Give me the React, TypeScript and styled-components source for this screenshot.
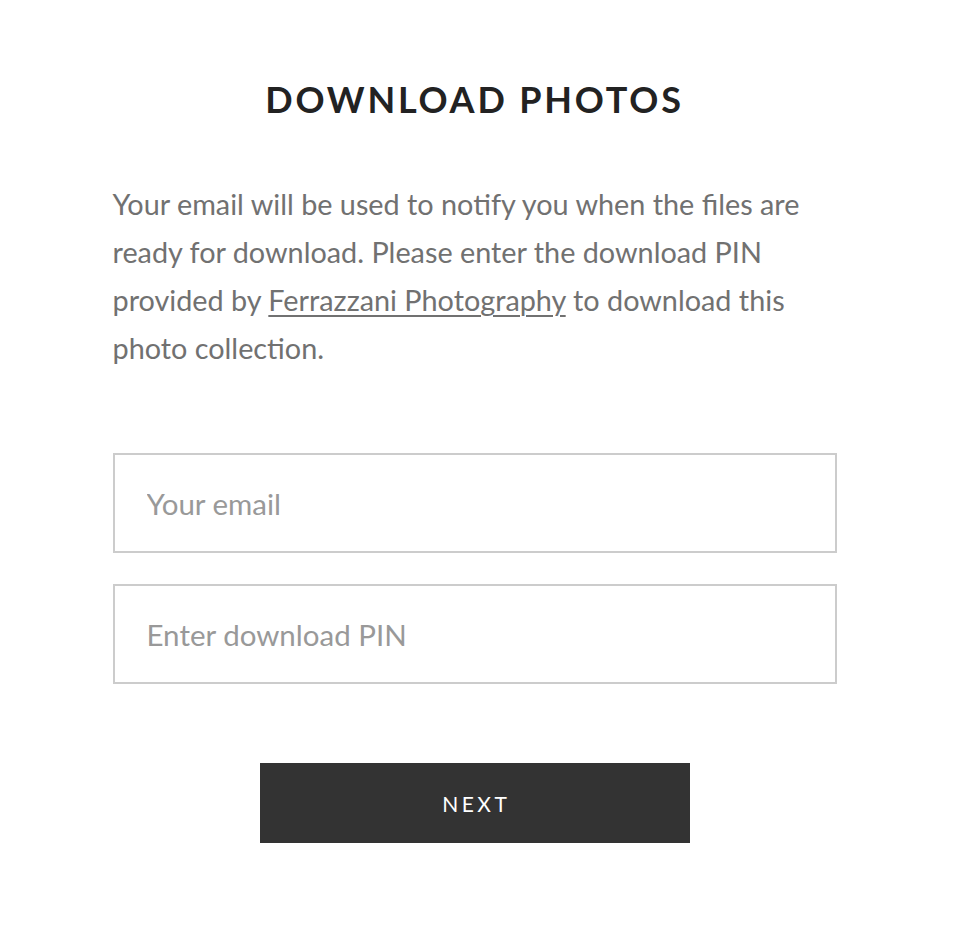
import React from "react";
import styled, { createGlobalStyle } from "styled-components";

const GlobalStyle = createGlobalStyle`
  html, body { margin: 0; padding: 0; background: #ffffff; }
  body { font-family: Lato, "Open Sans", Arial, sans-serif; }
  * { box-sizing: border-box; }
`;

const Page = styled.div`
  padding: 76px 13px 60px 0;
  display: flex;
  justify-content: center;
`;

const Panel = styled.div`
  width: 724px;
  display: flex;
  flex-direction: column;
`;

const Title = styled.h1`
  margin: 0;
  text-align: center;
  font-family: Lato, "Open Sans", sans-serif;
  font-weight: 700;
  font-size: 36px;
  line-height: 46px;
  letter-spacing: 2.8px;
  color: #222222;
  text-transform: uppercase;
`;

const Intro = styled.p`
  margin: 58px 0 0 0;
  font-family: Lato, sans-serif;
  font-size: 28.8px;
  line-height: 48px;
  color: #717171;
`;

const Link = styled.a`
  color: #717171;
  text-decoration: underline;
  text-underline-offset: 4px;
  text-decoration-thickness: 1.5px;
`;

const Form = styled.form`
  margin-top: 81px;
  display: flex;
  flex-direction: column;
  gap: 31px;
`;

const Field = styled.input`
  width: 100%;
  height: 100px;
  border: 2px solid #cccccc;
  border-radius: 0;
  padding: 0 32px;
  font-family: Lato, sans-serif;
  font-size: 29.5px;
  color: #444;
  background: #fff;
  outline: none;
  &::placeholder {
    color: #999999;
  }
`;

const ButtonRow = styled.div`
  display: flex;
  justify-content: center;
  margin-top: 48px;
`;

const NextButton = styled.button`
  width: 430px;
  height: 80px;
  border: none;
  background: #333333;
  color: #ffffff;
  font-family: Lato, sans-serif;
  font-size: 21px;
  letter-spacing: 3.5px;
  text-transform: uppercase;
  padding: 0 0 0 3.5px;
  cursor: pointer;
`;

export default function App() {
  return (
    <>
      <GlobalStyle />
      <Page>
        <Panel>
          <Title>Download Photos</Title>
          <Intro>
            Your email will be used to notify you when the files are ready for
            download. Please enter the download PIN provided by{" "}
            <Link href="#">Ferrazzani Photography</Link> to download this photo
            collection.
          </Intro>
          <Form onSubmit={(e) => e.preventDefault()}>
            <Field type="email" placeholder="Your email" />
            <Field type="text" placeholder="Enter download PIN" />
            <ButtonRow>
              <NextButton type="submit">Next</NextButton>
            </ButtonRow>
          </Form>
        </Panel>
      </Page>
    </>
  );
}
